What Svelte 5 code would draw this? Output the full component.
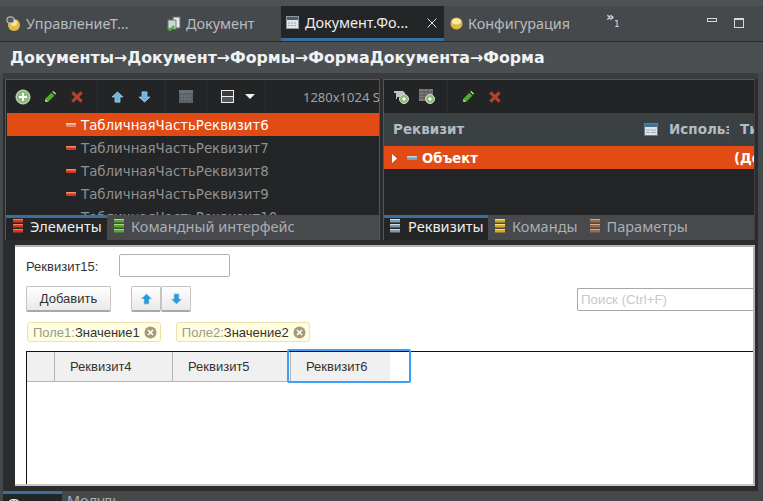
<script>
  const treeRows = ['ТабличнаяЧастьРеквизит6','ТабличнаяЧастьРеквизит7','ТабличнаяЧастьРеквизит8','ТабличнаяЧастьРеквизит9','ТабличнаяЧастьРеквизит10'];
</script>

<svelte:head><title>Форма</title></svelte:head>

{#snippet plus(cx, cy, r)}
  <circle {cx} {cy} {r} fill="#8fbc7c" stroke="#d4e2cc" stroke-width="1"/>
  <path d="M{cx-r+3} {cy}H{cx+r-3}M{cx} {cy-r+3}V{cy+r-3}" stroke="#fff" stroke-width="2"/>
{/snippet}
{#snippet pencil()}
  <svg class="ic pen" width="12" height="12" viewBox="0 0 14 14"><path d="M1.500 9 8.500 2l3.500 3.500-7 7H1.500z" fill="#4fae26"/><path d="M9.500 1 11 0l3 3-1 1.500z" fill="#b5e58a"/><path d="M1.500 9.500l3 3h-3z" fill="#d9f0c0"/></svg>
{/snippet}
{#snippet cross()}
  <svg class="ic" width="12" height="12" viewBox="0 0 13 13"><path d="M1.500 1.500l10 10M11.500 1.500l-10 10" stroke="#b8402f" stroke-width="3.400"/></svg>
{/snippet}
{#snippet arrowUp(fill)}
  <svg class="ic" width="13" height="12" viewBox="0 0 15 14"><path d="M7.500 1 14 7h-3.500v6h-6V7H1z" {fill} stroke="#cfe6f5" stroke-width=".6"/></svg>
{/snippet}
{#snippet arrowDown(fill)}
  <svg class="ic" width="13" height="12" viewBox="0 0 15 14"><path d="M7.500 13 14 7h-3.500V1h-6v6H1z" {fill} stroke="#cfe6f5" stroke-width=".6"/></svg>
{/snippet}
{#snippet stack(a, b)}
  <svg class="ic" width="10" height="14" viewBox="0 0 10 14"><rect x="0" y="0" width="10" height="3.500" fill={a}/><rect x="0" y="5" width="10" height="3.500" fill={a}/><rect x="0" y="10" width="10" height="3.500" fill={a}/><rect x="0" y="0" width="10" height="1" fill={b}/><rect x="0" y="5" width="10" height="1" fill={b}/><rect x="0" y="10" width="10" height="1" fill={b}/></svg>
{/snippet}
{#snippet dash(c, h)}
  <svg class="dash" width="10" height="4" viewBox="0 0 10 4"><rect width="10" height="4" rx="1" fill={c}/><rect width="10" height="1.500" rx=".5" fill={h}/></svg>
{/snippet}
{#snippet formIcon(w)}
  <svg class="ic" width={w} height="13" viewBox="0 0 14 13"><rect x=".5" y=".5" width="13" height="12" fill="#dfe4e8" stroke="#5f7f97"/><rect x="1" y="1" width="12" height="3" fill="#3d7196"/><path d="M2 7h4M7 7h5M2 9.500h4M7 9.500h5" stroke="#a3afb8"/></svg>
{/snippet}

<div class="ide">
  <div class="topstrip"></div>
  <header class="tabs">
    <div class="tab first"><svg class="ic" width="15" height="16" viewBox="0 0 15 16"><circle cx="8" cy="9" r="6" fill="#e3bd45"/><circle cx="8" cy="7" r="3" fill="#f6e8a2"/><rect x="1" y="1" width="7" height="6" rx="2" fill="#55595c" stroke="#ccc"/></svg><span>УправлениеТ...</span></div>
    <div class="tab doc"><svg class="ic" width="16" height="16" viewBox="0 0 16 16"><rect x="7" y="1" width="7" height="11" fill="#e9edf0" stroke="#666"/><rect x="2" y="4" width="8" height="9" fill="#cdd5da" stroke="#777"/><path d="M2 12l2 2 4-4" stroke="#46b030" stroke-width="2" fill="none"/></svg><span>Документ</span></div>
    <div class="tab active"><svg class="ic" width="13" height="13" viewBox="0 0 13 13"><rect x=".5" y=".5" width="12" height="12" fill="#e3e6e8" stroke="#8a9aa5"/><rect x="1" y="1" width="11" height="3" fill="#4a5a66"/><path d="M2 7h9M2 9.500h9" stroke="#9aa5ad" stroke-dasharray="2 1"/></svg><span>Документ.Фо...</span><svg class="close" width="10" height="10" viewBox="0 0 10 10"><path d="M.5.500l9 9M9.500.500l-9 9" stroke="#e6e6e6" stroke-width="1"/></svg></div>
    <div class="tab conf"><svg class="ic" width="13" height="13" viewBox="0 0 13 13"><circle cx="6.500" cy="6.500" r="6" fill="#e0b93f"/><ellipse cx="6.500" cy="4.500" rx="4.500" ry="3" fill="#f5e8a6"/></svg><span>Конфигурация</span></div>
    <div class="more"><span class="chev">»</span><span class="num">1</span></div>
    <div class="winbtns">
      <span class="min"></span>
      <span class="max"></span>
    </div>
  </header>

  <div class="crumbs">Документы→Документ→Формы→ФормаДокумента→Форма</div>

  <div class="editor">
    <div class="panels">
      <section class="panel left">
        <div class="toolbar">
          <span class="group g1">
            <svg class="ic" width="16" height="16" viewBox="0 0 16 16">{@render plus(8, 8, 7)}</svg>
            {@render pencil()}
            {@render cross()}
          </span>
          <span class="group g2">{@render arrowUp('#6cb4e2')}{@render arrowDown('#6cb4e2')}</span>
          <span class="group g3"><svg class="ic" width="14" height="13" viewBox="0 0 14 13"><rect width="14" height="13" fill="#5b6268"/><rect y="0" width="14" height="3" fill="#6a7278"/><path d="M2 6h10M2 9h10" stroke="#7b848a" stroke-dasharray="2 1"/></svg></span>
          <span class="group g4">
            <svg class="ic" width="13" height="13" viewBox="0 0 13 13"><rect x=".5" y=".5" width="12" height="12" fill="#3a3c3e" stroke="#eee"/><rect x="1" y="7" width="11" height="5" fill="#55585b"/><path d="M1 6.500h11" stroke="#eee"/></svg>
            <svg class="ic" width="10" height="5" viewBox="0 0 10 5"><path d="M0 0h10L5 5z" fill="#f2f2f2"/></svg>
          </span>
          <span class="res">1280x1024 Sh</span>
        </div>
        <div class="tree">
          {#each treeRows as row, i}
            <div class="row" class:selected={i === 0}>
              {@render dash(i === 0 ? '#e9856a' : '#d9351f', i === 0 ? '#f6c5b6' : '#f08a70')}
              <span>{row}</span>
            </div>
          {/each}
        </div>
        <div class="subtabs">
          <div class="sub on">{@render stack('#d9351f', '#f2836a')}<span>Элементы</span></div>
          <div class="sub">{@render stack('#55a62e', '#a6dd7c')}<span>Командный интерфейс</span></div>
        </div>
      </section>

      <section class="panel right">
        <div class="toolbar">
          <span class="group r1">
            <svg class="ic" width="15" height="15" viewBox="0 0 15 15"><path d="M0 2h9l2 2v4H3v2H2V4H0z" fill="#bcc5ca"/>{@render plus(10, 10, 4.5)}</svg>
            <svg class="ic" width="17" height="15" viewBox="0 0 17 15"><rect x="0" y="0" width="14" height="12" fill="#777e80"/><path d="M5 0v12M9 0v12" stroke="#a34d4d"/><path d="M0 3h14M0 6h14M0 9h14" stroke="#50565a"/>{@render plus(11, 10, 4.5)}</svg>
          </span>
          <span class="group r2">{@render pencil()}{@render cross()}</span>
        </div>
        <div class="thead">
          <span class="th-name">Реквизит</span>
          <span class="th-ico">{@render formIcon(14)}</span>
          <span class="th-use">Использование</span>
          <span class="th-type">Ти</span>
        </div>
        <div class="obj">
          <svg class="tri" width="5" height="9" viewBox="0 0 5 9"><path d="M0 0l5 4.500L0 9z" fill="#fff"/></svg>
          {@render dash('#7da4bf', '#b9d3e3')}
          <b>Объект</b>
          <b class="obj-type">(Документ</b>
        </div>
        <div class="fill"></div>
        <div class="subtabs">
          <div class="sub on r-on">{@render stack('#7f98aa', '#cfdfe9')}<span>Реквизиты</span></div>
          <div class="sub">{@render stack('#d2a92c', '#f6e27f')}<span>Команды</span></div>
          <div class="sub s3">{@render stack('#9b6b48', '#d6a886')}<span>Параметры</span></div>
        </div>
      </section>
    </div>

    <main class="form">
      <div class="field"><label for="r15">Реквизит15:</label><input id="r15" /></div>
      <div class="actions">
        <button class="btn add">Добавить</button>
        <button class="btn sq first">{@render arrowUp('#2f9ad8')}</button>
        <button class="btn sq">{@render arrowDown('#2f9ad8')}</button>
        <div class="search">Поиск (Ctrl+F)</div>
      </div>
      <div class="chips">
        <div class="chip"><span><i>Поле1:</i>Значение1</span><svg width="13" height="13" viewBox="0 0 13 13"><circle cx="6.500" cy="6.500" r="6" fill="#a89a78"/><path d="M4 4l5 5M9 4l-5 5" stroke="#fff" stroke-width="1.600"/></svg></div>
        <div class="chip"><span><i>Поле2:</i>Значение2</span><svg width="13" height="13" viewBox="0 0 13 13"><circle cx="6.500" cy="6.500" r="6" fill="#a89a78"/><path d="M4 4l5 5M9 4l-5 5" stroke="#fff" stroke-width="1.600"/></svg></div>
      </div>
      <div class="table">
        <div class="cols">
          <div class="col c0"></div>
          <div class="col c1">Реквизит4</div>
          <div class="col c2">Реквизит5</div>
          <div class="col c3">Реквизит6</div>
          <div class="focus"></div>
        </div>
      </div>
    </main>
  </div>

  <footer class="bottom">
    <div class="b-tab on">Форма</div>
    <div class="b-tab">Модуль</div>
  </footer>
</div>

<style>
  :global(body) { margin: 0; background: #46494c; }
  .ide { width: 763px; height: 501px; overflow: hidden; background: #46494c; display: flex; flex-direction: column; font-family: "DejaVu Sans", sans-serif; }
  .ic { flex: none; display: block; }
  .pen { margin-right: 2px; }
  .topstrip { height: 6px; flex: none; background: #4e5255; }

  .tabs { height: 36px; box-sizing: border-box; display: flex; align-items: stretch; background: #46494c; border-bottom: 1px solid #292b2d; font-size: 14.400px; color: #b6bcc0; flex: none; }
  .tab { display: flex; align-items: center; box-sizing: border-box; height: 35px; white-space: nowrap; font-family: "Noto Sans", sans-serif; flex: none; }
  .first { width: 165px; padding-left: 6px; gap: 5px; }
  .doc { width: 116px; padding-left: 1px; gap: 4px; }
  .active { width: 163px; padding-left: 5px; background: #242526; color: #eceeef; border-top: 1px solid #242526; border-bottom: 3px solid #3a6e9d; gap: 6px; }
  .close { margin-left: auto; margin-right: 7px; flex: none; }
  .conf { padding-left: 6px; gap: 5px; width: 162px; }
  .more { position: relative; width: 20px; color: #d8dcdf; flex: none; }
  .chev { position: absolute; left: 0; top: 3px; font-size: 13px; font-weight: 700; }
  .num { position: absolute; left: 8px; top: 13px; font-size: 9px; }
  .winbtns { margin-left: auto; display: flex; gap: 17px; padding: 12px 19px 0 0; align-items: flex-start; }
  .min { width: 10px; height: 4px; box-sizing: border-box; border: 1px solid #d4d8da; }
  .max { width: 10px; height: 10px; box-sizing: border-box; border: 1px solid #d4d8da; border-top-width: 2px; }

  .crumbs { height: 31px; line-height: 32px; background: #4b4f52; padding-left: 10px; font-weight: 700; font-size: 15.800px; color: #f0f2f3; flex: none; white-space: nowrap; }

  .editor { flex: none; height: 418px; box-sizing: border-box; margin: 0 5px 0 3px; background: #2b2c2e; border-top: 6px solid #3a3c3e; padding: 0 3px 5px 2px; display: flex; flex-direction: column; }
  .panels { display: flex; height: 161px; gap: 3px; flex: none; }
  .panel { display: flex; flex-direction: column; background: #242526; border: 1px solid #535659; border-bottom: 0; box-sizing: border-box; overflow: hidden; }
  .left { width: 375px; flex: none; }
  .right { flex: 1; min-width: 0; border-right-color: #3c3e40; }
  .toolbar { height: 33px; flex: none; display: flex; align-items: center; background: #232425; }
  .group { display: flex; align-items: center; height: 100%; box-sizing: border-box; border-right: 1px solid #2d2e30; flex: none; }
  .g1 { width: 92px; padding-left: 9px; gap: 13px; }
  .g2 { width: 68px; padding-left: 13px; gap: 14px; }
  .g3 { width: 41px; padding-left: 13px; }
  .g4 { width: 59px; padding-left: 14px; gap: 11px; }
  .r1 { width: 64px; padding-left: 10px; gap: 10px; }
  .r2 { padding-left: 14px; gap: 13px; border-right: 0; }
  .res { margin-left: 37px; font-size: 13px; color: #9aa3a9; white-space: nowrap; font-family: "Noto Sans", sans-serif; }

  .tree { flex: 1; min-height: 0; overflow: hidden; padding-left: 1px; font-size: 13.350px; color: #8f9294; }
  .row { height: 23px; box-sizing: border-box; padding: 1px 0 0 59px; display: flex; align-items: center; gap: 5px; white-space: nowrap; }
  .row.selected { background: #e24b13; color: #fff; }
  .dash { flex: none; }

  .subtabs { height: 25px; flex: none; display: flex; background: #47494d; font-size: 14.550px; color: #a9afb3; font-family: "Noto Sans", sans-serif; }
  .sub { display: flex; align-items: center; gap: 7px; padding: 0 0 4px 7px; white-space: nowrap; height: 100%; box-sizing: border-box; }
  .sub.on { width: 101px; background: #242526; color: #eceeef; border-top: 3px solid #3a6e9d; padding-bottom: 7px; }
  .sub.r-on { width: 104px; padding-left: 6px; gap: 8px; }
  .sub.s3 { padding-left: 12px; }

  .thead { height: 33px; flex: none; background: #3b4043; display: flex; align-items: stretch; line-height: 33px; font-weight: 700; font-size: 13.500px; color: #b3bcc2; overflow: hidden; white-space: nowrap; }
  .thead span { box-sizing: border-box; flex: none; }
  .th-name { width: 250px; padding-left: 9px; }
  .th-ico { width: 27px; padding-left: 9px; border-left: 1px solid #3f4447; display: flex; align-items: center; }
  .th-use { width: 68px; padding-left: 7px; overflow: hidden; border-left: 1px solid #3f4447; }
  .th-type { padding-left: 10px; border-left: 1px solid #3f4447; }
  .obj { height: 23px; flex: none; background: #e24b13; display: flex; align-items: center; padding: 1px 0 0 8px; box-sizing: border-box; color: #fff; font-size: 13.200px; white-space: nowrap; }
  .tri { flex: none; }
  .obj .dash { margin-left: 10px; margin-right: 5px; }
  .obj-type { margin-left: auto; width: 20px; overflow: hidden; }
  .fill { flex: 1; }

  .form { margin: 5px 0 0 10px; flex: 1; min-height: 0; display: flex; flex-direction: column; background: #fff; border-top: 2px solid #b5b5b5; border-bottom: 2px solid #c8c8c8; border-right: 2px solid #b5b5b5; box-sizing: border-box; padding: 7px 0 0 11px; font-family: "Liberation Sans", sans-serif; font-size: 13px; color: #333; overflow: hidden; }
  .field { display: flex; align-items: center; gap: 22px; height: 23px; flex: none; }
  .field label { width: 71px; padding-top: 2px; }
  .field input { width: 111px; height: 23px; box-sizing: border-box; border: 1px solid #b0b0b0; border-radius: 2px; padding: 0; }
  .actions { display: flex; margin-top: 9px; align-items: flex-start; height: 26px; flex: none; }
  .btn { height: 26px; box-sizing: border-box; border: 1px solid #c4c4c4; border-bottom: 2px solid #a8a8a8; border-radius: 2px; background: linear-gradient(#fff, #e9e9e9); font: inherit; color: #333; display: flex; align-items: center; justify-content: center; padding: 0; }
  .add { width: 85px; }
  .sq { width: 30px; }
  .btn.first { margin-left: 20px; }
  .search { margin: 2px 0 0 386px; flex: 1; height: 23px; box-sizing: border-box; border: 1px solid #a8a8a8; border-right: 0; border-radius: 2px 0 0 2px; padding-left: 3px; line-height: 21px; color: #c9c9c9; font-size: 13.300px; white-space: nowrap; }
  .chips { display: flex; gap: 14.500px; margin: 10px 0 0 1px; flex: none; }
  .chip { height: 20px; box-sizing: border-box; border: 1px solid #eee2a8; border-radius: 3px; background: #fffde2; display: flex; align-items: center; gap: 4.500px; padding: 0 3px 0 5px; white-space: nowrap; }
  .chip i { font-style: normal; color: #9b9b8a; }
  .table { margin-top: 9px; flex: 1; min-height: 0; border-left: 1px solid #111; border-top: 1px solid #111; box-sizing: border-box; }
  .cols { display: flex; height: 30px; position: relative; }
  .col { height: 30px; box-sizing: border-box; background: #f0f0f0; border-right: 1px solid #b5b5b5; border-bottom: 1px solid #b5b5b5; line-height: 29px; padding-left: 15px; flex: none; }
  .c0 { width: 28px; }
  .c1, .c2 { width: 118px; }
  .c3 { width: 99px; border-right: 0; }
  .focus { position: absolute; left: 260px; top: -3px; width: 124px; height: 34px; box-sizing: border-box; border: 2px solid #3f9ff5; border-radius: 2px; pointer-events: none; }

  .bottom { flex: none; display: flex; height: 10px; overflow: hidden; font-family: "Noto Sans", sans-serif; font-size: 14.400px; color: #a9afb3; padding-left: 3px; background: #46494c; }
  .b-tab { padding: 0 5px; line-height: 20px; }
  .b-tab.on { width: 59px; box-sizing: border-box; background: #242526; border-top: 3px solid #3a6e9d; color: #eee; }
</style>
